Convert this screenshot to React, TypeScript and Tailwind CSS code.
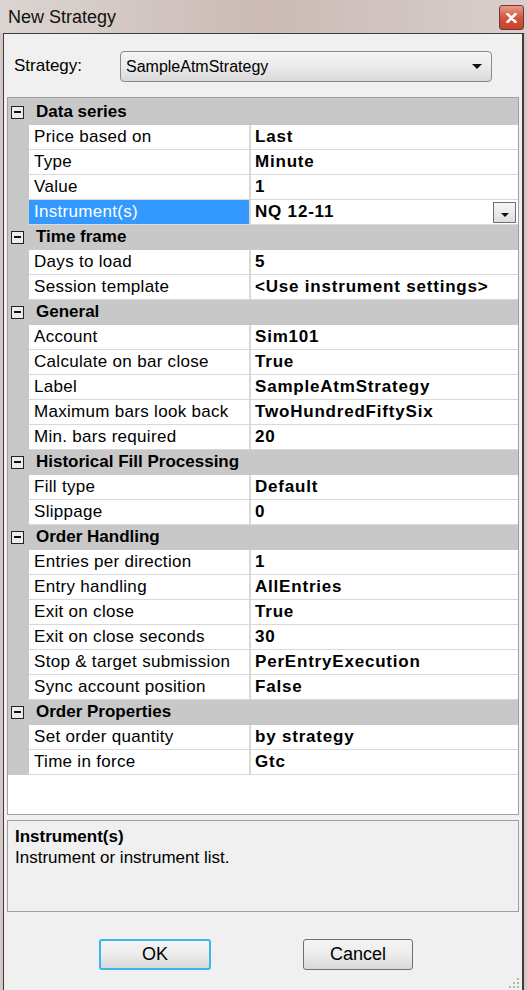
import React from 'react';

type Section = { title: string; rows: [string, string][] };

const sections: Section[] = [
  {
    title: 'Data series',
    rows: [
      ['Price based on', 'Last'],
      ['Type', 'Minute'],
      ['Value', '1'],
      ['Instrument(s)', 'NQ 12-11'],
    ],
  },
  {
    title: 'Time frame',
    rows: [
      ['Days to load', '5'],
      ['Session template', '<Use instrument settings>'],
    ],
  },
  {
    title: 'General',
    rows: [
      ['Account', 'Sim101'],
      ['Calculate on bar close', 'True'],
      ['Label', 'SampleAtmStrategy'],
      ['Maximum bars look back', 'TwoHundredFiftySix'],
      ['Min. bars required', '20'],
    ],
  },
  {
    title: 'Historical Fill Processing',
    rows: [
      ['Fill type', 'Default'],
      ['Slippage', '0'],
    ],
  },
  {
    title: 'Order Handling',
    rows: [
      ['Entries per direction', '1'],
      ['Entry handling', 'AllEntries'],
      ['Exit on close', 'True'],
      ['Exit on close seconds', '30'],
      ['Stop & target submission', 'PerEntryExecution'],
      ['Sync account position', 'False'],
    ],
  },
  {
    title: 'Order Properties',
    rows: [
      ['Set order quantity', 'by strategy'],
      ['Time in force', 'Gtc'],
    ],
  },
];

const MinusBox = () => (
  <div className="w-[13px] h-[13px] border border-[#222] bg-[#ececec] flex items-center justify-center">
    <div className="w-[7px] h-[2px] bg-[#111]" />
  </div>
);

const DownArrow = ({ size = 5 }: { size?: number }) => (
  <svg width={size * 2} height={size} viewBox="0 0 10 5">
    <path d="M0 0 L10 0 L5 5 Z" fill="#111" />
  </svg>
);

const App: React.FC = () => {
  const selected = 'Instrument(s)';

  return (
    <div className="w-[527px] h-[990px] overflow-hidden bg-[#d3c8c5] font-['Liberation_Sans',Arial,sans-serif] text-black">
      {/* Title bar */}
      <div className="h-[33px] flex items-center justify-between pl-[8px] pr-[3px] bg-gradient-to-r from-[#dcd5d2] via-[#cbbab5] to-[#d8cfcc]">
        <span className="text-[18px] leading-none text-[#111]">New Strategy</span>
        <div className="w-[25px] h-[25px] mt-[2px] rounded-[3px] border border-[#6b3a33] bg-gradient-to-b from-[#e89a88] via-[#d4563f] to-[#c3422c] flex items-center justify-center">
          <svg width="11" height="10" viewBox="0 0 11 10">
            <path d="M1.5 1 L9.5 9 M9.5 1 L1.5 9" stroke="#fff" strokeWidth="2.6" strokeLinecap="round" />
          </svg>
        </div>
      </div>

      {/* Window body */}
      <div className="ml-[3px] w-[521px] h-[957px] border-l border-t border-r-2 border-[#3c3c3c] bg-[#f0f0f0] flex flex-col">
        <div className="h-[63px] flex items-center pl-[10px]">
          <span className="text-[17px] w-[106px]">Strategy:</span>
          <div className="w-[372px] h-[31px] mt-[2px] rounded-[4px] border border-[#8a8a8a] bg-gradient-to-b from-[#f4f4f4] via-[#ebebeb] to-[#d9d9d9] flex items-center justify-between pl-[5px] pr-[9px]">
            <span className="text-[16px]">SampleAtmStrategy</span>
            <DownArrow size={5} />
          </div>
        </div>

        {/* Property grid */}
        <div className="mx-[3px] h-[718px] border border-[#a0a0a0] bg-white flex flex-col">
          <div className="h-[2px] bg-[#c8c8c8]" />
          {sections.map((s) => (
            <React.Fragment key={s.title}>
              <div className="h-[25px] flex items-center bg-[#c8c8c8] border-b border-[#c8c8c8]">
                <div className="w-[21px] pl-[3px]">
                  <MinusBox />
                </div>
                <span className="pl-[7px] text-[17px] font-bold">{s.title}</span>
              </div>
              {s.rows.map(([label, value]) => {
                const isSel = label === selected;
                return (
                  <div key={label} className="h-[25px] flex">
                    <div className="w-[21px] bg-[#c8c8c8]" />
                    <div
                      className={
                        'w-[222px] flex items-center pl-[5px] text-[17px] tracking-[0.3px] border-b border-r-2 border-[#d9d9d9] ' +
                        (isSel ? 'bg-[#3399ff] text-white' : 'bg-white')
                      }
                    >
                      {label}
                    </div>
                    <div className="flex-1 flex items-center justify-between pl-[4px] pr-[2px] border-b border-[#d9d9d9]">
                      <span className="text-[17px] font-bold tracking-[0.8px]">{value}</span>
                      {isSel && (
                        <div className="w-[23px] h-[21px] border border-[#6e6e6e] bg-gradient-to-b from-[#f6f6f6] to-[#dedede] flex items-end justify-center pb-[5px]">
                          <DownArrow size={4} />
                        </div>
                      )}
                    </div>
                  </div>
                );
              })}
            </React.Fragment>
          ))}
        </div>

        {/* Description */}
        <div className="mt-[5px] mx-[3px] h-[92px] border border-[#a0a0a0] bg-[#f0f0f0] px-[7px] pt-[6px]">
          <div className="text-[17px] font-bold leading-[20px]">Instrument(s)</div>
          <div className="text-[17px] leading-[21px]">Instrument or instrument list.</div>
        </div>

        {/* Buttons */}
        <div className="flex pl-[95px] gap-[92px] mt-[27px]">
          <button className="w-[112px] h-[31px] rounded-[3px] border-2 border-[#3cb6e6] bg-gradient-to-b from-[#f4f4f4] via-[#ececec] to-[#d8d8d8] text-[18px]">
            OK
          </button>
          <button className="w-[110px] h-[31px] rounded-[3px] border border-[#707070] bg-gradient-to-b from-[#f4f4f4] via-[#ececec] to-[#d8d8d8] text-[18px]">
            Cancel
          </button>
        </div>

        <div className="flex-1 flex items-end justify-end pr-[3px] pb-[2px]">
          <svg width="12" height="12" viewBox="0 0 12 12">
            {[
              [10, 2],
              [6, 6],
              [10, 6],
              [2, 10],
              [6, 10],
              [10, 10],
            ].map(([x, y]) => (
              <rect key={`${x}-${y}`} x={x} y={y} width="2" height="2" fill="#b5b5b5" />
            ))}
          </svg>
        </div>
      </div>
    </div>
  );
};

export default App;
